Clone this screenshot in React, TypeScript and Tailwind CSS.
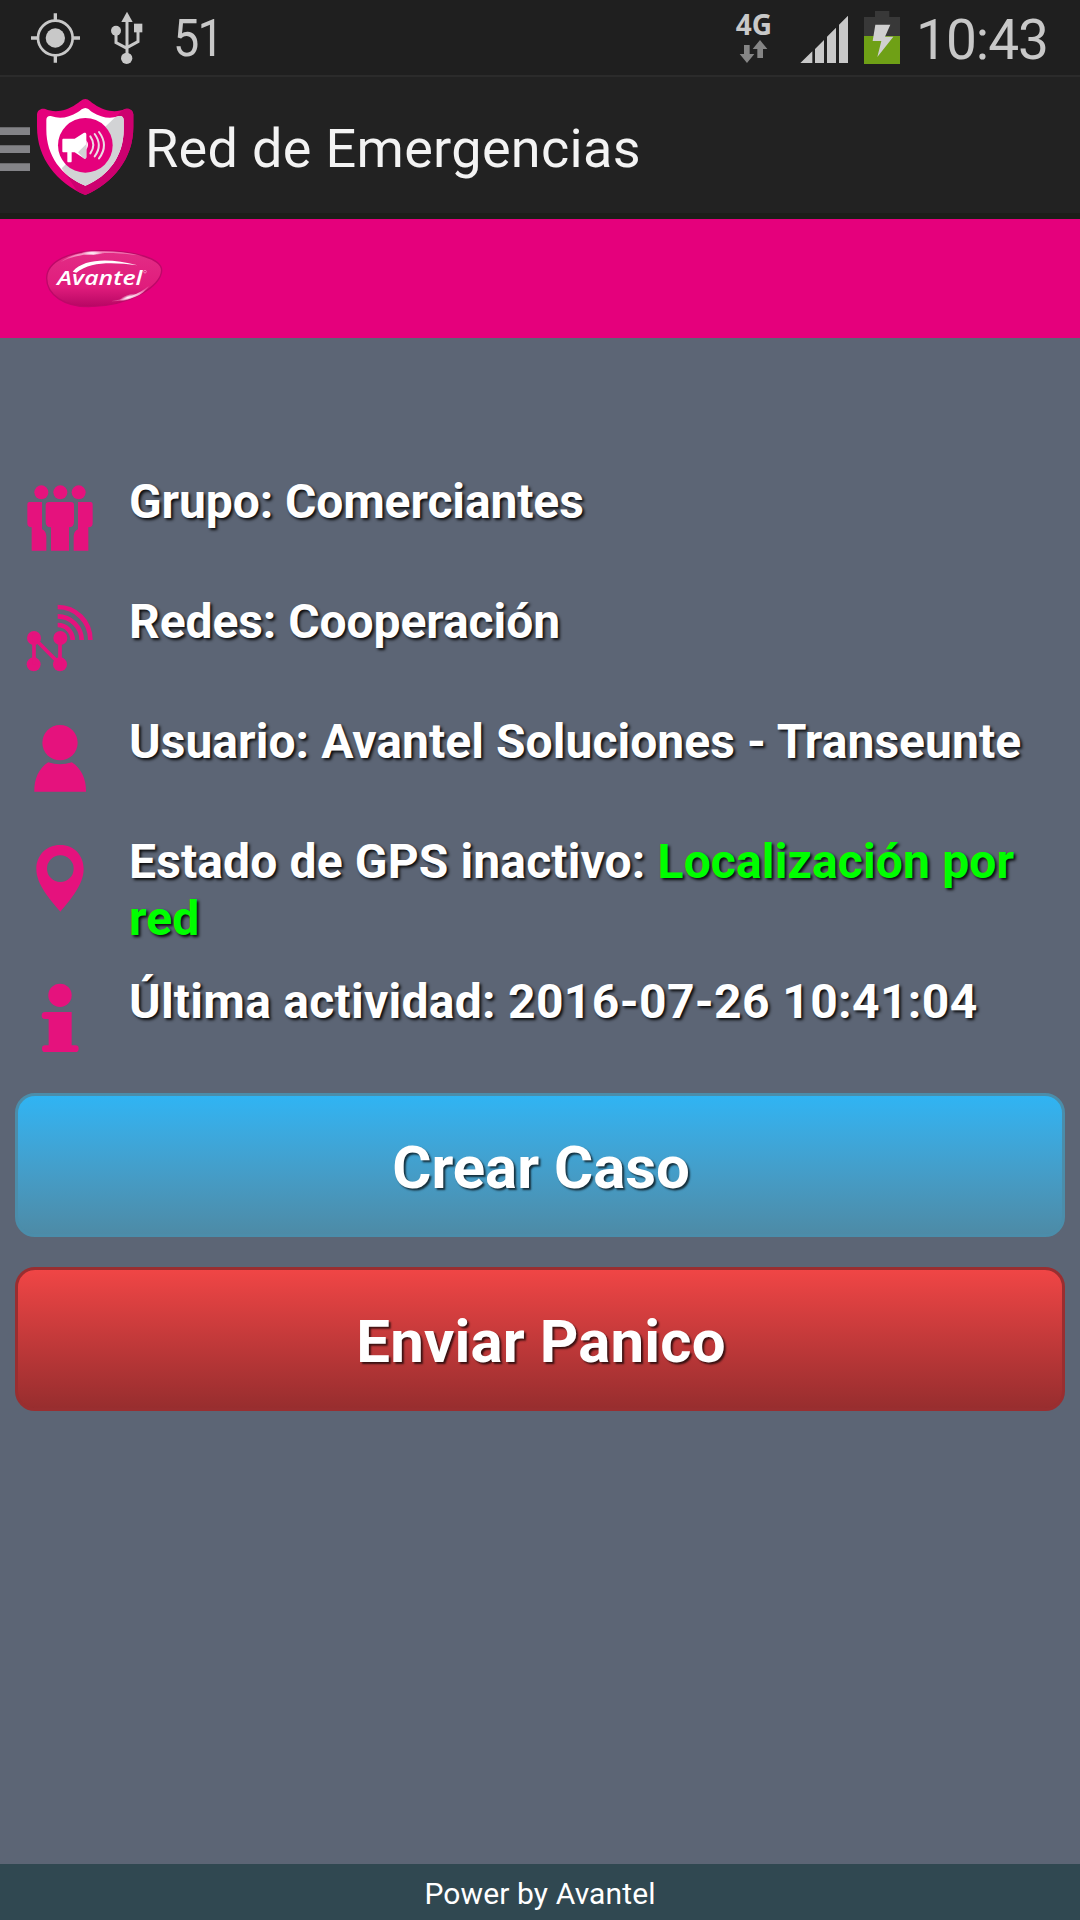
import type { ReactNode } from "react";

const PINK = "#e5127d";

const SHIELD =
  "M256 57c-10 0-18 10-28 16-32 23-68 25-92 14-12-4-24 3-25 16v37c0 96 60 168 145 205 84-37 144-109 144-205v-37c-1-13-13-20-25-16-24 11-60 9-92-14-10-6-17-16-27-16z";
const SHIELD_INNER =
  "M256 84c-8 0-14 7-22 12-28 18-56 21-79 13-9-3-16 2-16 11v29c0 77 44 138 117 168 71-30 115-91 115-168v-29c0-9-7-14-16-11-23 8-51 5-79-13-7-5-12-12-20-12z";

function StatusBar() {
  return (
    <div className="flex h-[77px] w-full items-start justify-between border-b-2 border-[#2b2b2b] bg-[#1f1f1f] text-[#c8c8c8]">
      <div className="flex items-start">
        <svg className="h-[75px] w-[173px]" viewBox="0 0 519 225" fill="#c8c8c8">
          <circle cx="166" cy="114" r="52" fill="none" stroke="#c8c8c8" strokeWidth="8" />
          <circle cx="166" cy="114" r="29" />
          <path d="M161 40h10v22h-10zM161 166h10v22h-10zM93 109h22v10h-22zM218 109h22v10h-22z" />
          <path d="M381 35l17 31h-34z" />
          <path d="M381 60v110M348 95v33l33 17M414 92v33l-33 18" fill="none" stroke="#c8c8c8" strokeWidth="9" />
          <circle cx="348" cy="92" r="15" />
          <path d="M402 71h25v26h-25z" />
          <circle cx="380" cy="175" r="17" />
        </svg>
        <span className="inline-block origin-left scale-x-90 pt-[8px] text-[52px] leading-[61px] tracking-[-2px]">51</span>
      </div>
      <div className="flex items-start">
        <div className="flex w-[60px] flex-col items-center pt-[10px]">
          <span className="pl-[2px] font-['Open_Sans'] text-[28px] leading-[28px] font-bold">4G</span>
          <svg className="h-[25px] w-[30px]" viewBox="0 0 90 75" fill="#858585">
            <path d="M18 21h17v27h14L27 75 5 48h13zM58 60V33H44L66 6l22 27H75v27z" />
          </svg>
        </div>
        <svg className="h-[75px] w-[117px]" viewBox="189 0 351 225">
          <path fill="#c8c8c8" d="M241 189l36-35v35zM285 189v-42l27-27v69zM321 189v-79l27-27v106zM357 189V74l27-27v142z" />
          <path fill="#383838" d="M465 33h43v18h32v57H432V51h33z" />
          <path fill="#6fa016" d="M432 108h108v84H432z" />
          <path fill="#d0d0d0" d="M466 74h45l-16 36h25l-48 61 12-48h-26z" />
        </svg>
        <span className="w-[180px] pt-[8px] pl-4 text-[55px] leading-[65px] tracking-[-1px]">10:43</span>
      </div>
    </div>
  );
}

function Header() {
  return (
    <div className="flex h-[142px] items-start border-b-[6px] border-[#1c1d19] bg-[#222222]">
      <svg className="h-[136px] w-[145px]" viewBox="0 -9 435 408">
        <defs>
          <clipPath id="shieldShade">
            <path d="M400 60L185 265 250 360 420 340z" />
          </clipPath>
        </defs>
        <path fill="#838387" d="M0 142h90v23H0zM0 196h90v23H0zM0 250h90v23H0z" />
        <path fill="#e5007c" d={SHIELD} />
        <path fill="#cd006f" clipPath="url(#shieldShade)" d={SHIELD} />
        <path fill="#fff" d={SHIELD_INNER} />
        <path fill="#d2d3d5" clipPath="url(#shieldShade)" d={SHIELD_INNER} />
        <circle cx="256" cy="196" r="82" fill="#e5007c" />
        <path fill="#fff" d="M191 176h33l27-17c4-2 8-1 8 4v68c0 5-4 6-8 4l-27-18h-9v26c0 2-1 4-3 4h-7c-2 0-3-2-3-4v-26h-11c-3 0-4-1-4-4v-33c0-3 1-4 4-4z" />
        <path fill="#d2d3d5" d="M259 192v39c0 5-4 6-8 4l-17-18z" />
        <path fill="#fff" d="M259 181q10 14 0 28z" />
        <path fill="none" stroke="#ecdce5" strokeWidth="6" strokeLinecap="round" d="M271 169q18 26 0 51M284 162q25 34 0 67M297 156q30 40 0 79" />
      </svg>
      <h1 className="pt-[40px] text-[54px] leading-[64px] tracking-[0.32px] text-[#f3f3f3]">Red de Emergencias</h1>
    </div>
  );
}

function Brand() {
  return (
    <div className="h-[119px] bg-[#e5007c]">
      <svg className="h-[119px] w-[240px]" viewBox="0 27 720 357">
        <defs>
          <linearGradient id="pill" x1="0" y1="0" x2="0" y2="1">
            <stop offset="0" stopColor="#e32d86" />
            <stop offset="0.65" stopColor="#e01c7c" />
            <stop offset="1" stopColor="#b80664" />
          </linearGradient>
          <radialGradient id="glint">
            <stop offset="0" stopColor="#fff" />
            <stop offset="0.45" stopColor="#ffd3e8" stopOpacity="0.8" />
            <stop offset="1" stopColor="#f48abd" stopOpacity="0.5" />
          </radialGradient>
          <radialGradient id="spark">
            <stop offset="0" stopColor="#fff" />
            <stop offset="1" stopColor="#fff" stopOpacity="0" />
          </radialGradient>
        </defs>
        <path fill="url(#pill)" stroke="#bd0868" strokeWidth="4" d="M140 205c0-50 68-84 165-83 100 1 180 24 180 59 0 48-99 109-219 109-71 0-126-34-126-85z" />
        <path fill="url(#glint)" d="M182 156c48-37 145-43 246-18-70-12-125-11-148-4-32-2-66 6-98 22z" />
        <ellipse cx="276" cy="129" rx="32" ry="7" fill="url(#spark)" />
        <path fill="url(#glint)" d="M332 274c48-7 84-22 115-46-21 29-53 44-115 46z" />
        <ellipse cx="384" cy="262" rx="28" ry="8" fill="url(#spark)" transform="rotate(-20 384 262)" />
        <path fill="#fff" d="M218 185c35-41 115-40 194-19-72-9-140-12-183 22z" />
        <text x="172" y="226" fill="#fff" fontFamily="Open Sans" fontStyle="italic" fontWeight="600" fontSize="61" textLength="255" lengthAdjust="spacingAndGlyphs">Avantel</text>
        <circle cx="435" cy="185" r="4" fill="none" stroke="#f6a5cc" strokeWidth="2" />
      </svg>
    </div>
  );
}

function Row({ icon, box, tall, children }: { icon: ReactNode; box: string; tall?: boolean; children: ReactNode }) {
  return (
    <div className={tall ? "flex h-[140px] items-start" : "flex h-[120px] items-start"}>
      <svg className="h-[120px] w-[129px] shrink-0" viewBox={box} fill={PINK}>
        {icon}
      </svg>
      <p className="text-[48px] leading-[57px] font-bold whitespace-nowrap text-white [text-shadow:2px_2px_3px_rgba(0,0,0,0.9)]">{children}</p>
    </div>
  );
}

function ActionButton({ label, look }: { label: string; look: string }) {
  return (
    <button className={`flex h-[144px] w-full items-center justify-center rounded-[20px] border-[3px] bg-gradient-to-b bg-origin-border pt-[5px] pl-[2px] text-[60px] font-bold text-white [text-shadow:2px_2px_2px_rgba(0,0,0,0.7)] ${look}`}>
      {label}
    </button>
  );
}

export default function App() {
  return (
    <div className="flex h-[1920px] w-[1080px] flex-col overflow-hidden bg-[#5c6575] font-[Roboto,sans-serif]">
      <StatusBar />
      <Header />
      <Brand />
      <main className="flex-1 pt-[135px]">
        <Row
          box="0 39 387 360"
          icon={
            <>
              <circle cx="124" cy="97" r="21" />
              <circle cx="181" cy="97" r="21" />
              <circle cx="236" cy="97" r="21" />
              <path d="M88 126h38v82q12 5 13 20v44H95v-70q-13 0-13-13v-54q0-9 6-9zM147 126h66q9 0 9 9v50q0 17-15 17v70h-54v-70q-16 0-16-17v-50q0-9 10-9zM234 126h38q6 0 6 9v54q0 13-13 13v70h-44v-44q1-15 13-20z" />
            </>
          }
        >
          <span className="tracking-[-0.12px]">Grupo: Comerciantes</span>
        </Row>
        <Row
          box="0 399 387 360"
          icon={
            <>
              <circle cx="102" cy="534" r="21" />
              <circle cx="181" cy="534" r="21" />
              <circle cx="101" cy="613" r="21" />
              <circle cx="180" cy="613" r="21" />
              <path d="M102 613v-79l78 79v-79" fill="none" stroke={PINK} strokeWidth="11" />
              <path d="M173 441c54 0 98 43 98 99M173 469c39 0 72 32 72 71M173 495c25 0 45 20 45 45" fill="none" stroke={PINK} strokeWidth="14" />
            </>
          }
        >
          <span className="tracking-[-0.08px]">Redes: Cooperación</span>
        </Row>
        <Row
          box="0 39 387 360"
          icon={
            <>
              <circle cx="180" cy="128" r="53" />
              <path d="M145 187q35 12 70 0c28 17 44 50 43 88H103c-1-38 14-71 42-88z" />
            </>
          }
        >
          <span className="tracking-[0.05px]">Usuario: Avantel Soluciones - Transeunte</span>
        </Row>
        <Row
          tall
          box="0 399 387 360"
          icon={<path fillRule="evenodd" d="M181 435c-42 0-72 31-72 72 0 46 41 91 72 128 31-37 70-82 70-128 0-41-29-72-70-72zM181 466a40 40 0 1 1 0 80 40 40 0 0 1 0-80z" />}
        >
          <span className="tracking-[0.13px]">
            Estado de GPS inactivo: <span className="text-[#00ff00]">Localización por<br />red</span>
          </span>
        </Row>
        <Row
          box="0 819 387 360"
          icon={
            <>
              <circle cx="180" cy="886" r="35" />
              <path d="M135 936h80v100h11q10 0 10 10t-10 10h-91q-9 0-9-10t9-10h11v-79h-11q-10 0-10-10t10-11z" />
            </>
          }
        >
          <span className="tracking-[0.26px]">Última actividad: </span>
          <span className="tracking-[0.38px]">2016-07-26 10:41:04</span>
        </Row>
        <div className="flex flex-col gap-[30px] px-[15px]">
          <ActionButton label="Crear Caso" look="tracking-[-0.05px] border-[#4b8daa] from-[#2eb5f5] to-[#4d8aa5]" />
          <ActionButton label="Enviar Panico" look="tracking-[0.12px] border-[#992e30] from-[#f24646] to-[#962d2e]" />
        </div>
      </main>
      <footer className="flex h-[56px] items-center justify-center bg-[#304851] pt-[2px] text-[30px] tracking-[0.12px] text-white">Power by Avantel</footer>
    </div>
  );
}
